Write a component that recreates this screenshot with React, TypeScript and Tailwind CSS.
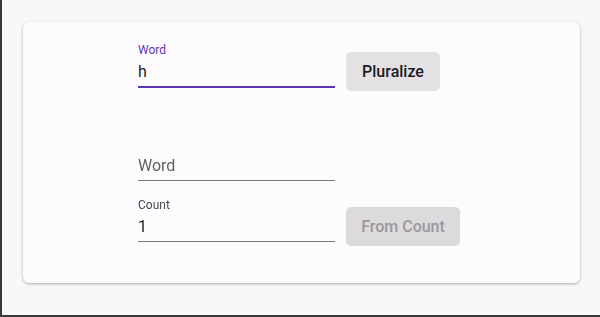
import { useState } from 'react';

export default function App() {
  const [word, setWord] = useState('h');
  const [countWord, setCountWord] = useState('');
  const [count, setCount] = useState('1');

  return (
    <div
      className="h-[317px] w-[600px] bg-[#f9f7fa] border-l-2 border-b-2 border-[#3a3a3a] overflow-hidden"
      style={{ fontFamily: 'Roboto, "Liberation Sans", sans-serif' }}
    >
      <div className="ml-[21px] mt-[22px] w-[557px] h-[261px] bg-[#fdfbfe] rounded-md shadow-[0_1px_3px_rgba(0,0,0,0.3)] pl-[115px] pt-[20px]">
        {/* Pluralize */}
        <div className="flex items-start gap-[11px]">
          <div className="w-[197px]">
            <label className="block text-[12px] leading-[16px] text-[#5e35b1]">Word</label>
            <div className="border-b-2 border-[#5e35b1] pt-[2px] pb-[2px] flex items-center">
              <input
                autoFocus
                value={word}
                onChange={(e) => setWord(e.target.value)}
                className="w-full bg-transparent outline-none text-[16px] leading-[24px] text-[#1c1b1f] caret-[#1c1b1f]"
              />
            </div>
          </div>
          <button className="mt-[10px] w-[94px] h-[39px] rounded-[5px] bg-[#e3e1e4] text-[16px] font-medium text-[#1c1b1f]">
            Pluralize
          </button>
        </div>

        {/* From count */}
        <div className="mt-[63px] w-[197px]">
          <div className="border-b border-[#7a7a7a] pb-[2px]">
            <input
              value={countWord}
              onChange={(e) => setCountWord(e.target.value)}
              placeholder="Word"
              className="w-full bg-transparent outline-none text-[16px] leading-[24px] text-[#1c1b1f] placeholder:text-[#5f5f62]"
            />
          </div>
        </div>
        <div className="flex items-start gap-[11px] mt-[16px]">
          <div className="w-[197px]">
            <label className="block text-[12px] leading-[16px] text-[#49454f]">Count</label>
            <div className="border-b border-[#7a7a7a] pt-[2px] pb-[2px]">
              <input
                value={count}
                onChange={(e) => setCount(e.target.value)}
                className="w-full bg-transparent outline-none text-[16px] leading-[24px] text-[#1c1b1f]"
              />
            </div>
          </div>
          <button
            disabled
            className="mt-[10px] w-[114px] h-[39px] rounded-[5px] bg-[#dcdadd] text-[16px] font-medium text-[#9a989b]"
          >
            From Count
          </button>
        </div>
      </div>
    </div>
  );
}
